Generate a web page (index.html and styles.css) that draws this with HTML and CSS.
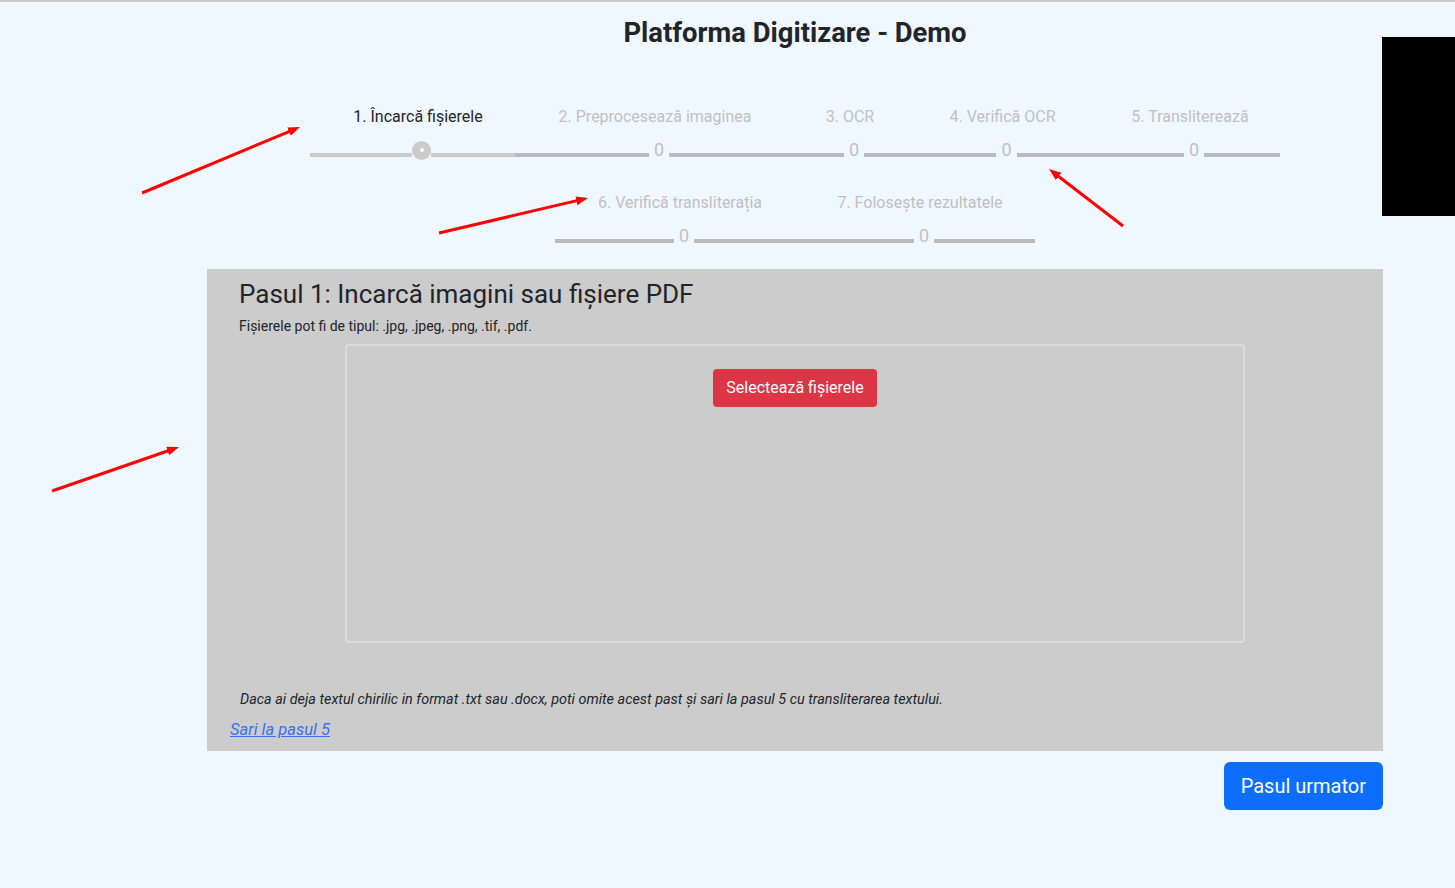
FILE: index.html
```html
<!DOCTYPE html>
<html lang="ro">
<head>
<meta charset="utf-8">
<title>Platforma Digitizare - Demo</title>
<link rel="stylesheet" href="styles.css">
</head>
<body>
<div class="topline"></div>
<div class="page">
  <h1 class="title">Platforma Digitizare - Demo</h1>
  <div class="stepper">
    <div class="step s1 active">
      <div class="label">1. Încarcă fișierele</div>
      <div class="track"><span class="bar"></span><span class="dot"></span><span class="bar"></span></div>
    </div>
    <div class="step s2">
      <div class="label">2. Preprocesează imaginea</div>
      <div class="track"><span class="bar"></span><span class="num">0</span><span class="bar"></span></div>
    </div>
    <div class="step s3">
      <div class="label">3. OCR</div>
      <div class="track"><span class="bar"></span><span class="num">0</span><span class="bar"></span></div>
    </div>
    <div class="step s4">
      <div class="label">4. Verifică OCR</div>
      <div class="track"><span class="bar"></span><span class="num">0</span><span class="bar"></span></div>
    </div>
    <div class="step s5">
      <div class="label">5. Transliterează</div>
      <div class="track"><span class="bar"></span><span class="num">0</span><span class="bar"></span></div>
    </div>
    <div class="step s6">
      <div class="label">6. Verifică transliterația</div>
      <div class="track"><span class="bar"></span><span class="num">0</span><span class="bar"></span></div>
    </div>
    <div class="step s7">
      <div class="label">7. Folosește rezultatele</div>
      <div class="track"><span class="bar"></span><span class="num">0</span><span class="bar"></span></div>
    </div>
  </div>

  <section class="panel">
    <h2 class="panel-title">Pasul 1: Incarcă imagini sau fișiere PDF</h2>
    <p class="panel-sub">Fișierele pot fi de tipul: .jpg, .jpeg, .png, .tif, .pdf.</p>
    <div class="dropzone">
      <button class="btn-select" type="button">Selectează fișierele</button>
    </div>
    <p class="hint">Daca ai deja textul chirilic in format .txt sau .docx, poti omite acest past și sari la pasul 5 cu transliterarea textului.</p>
    <a class="skip" href="#">Sari la pasul 5</a>
  </section>

  <div class="actions">
    <button class="btn-next" type="button">Pasul urmator</button>
  </div>
</div>

<div class="blackbox"></div>

<svg class="annotations" width="1455" height="888" viewBox="0 0 1455 888" aria-hidden="true">
  <defs>
    <marker id="ah" markerWidth="13" markerHeight="10" refX="6" refY="4.5" orient="auto" markerUnits="userSpaceOnUse">
      <path d="M0,0 L12,4.5 L0,9 z" fill="#f00"/>
    </marker>
  </defs>
  <g stroke="#f00" stroke-width="3" stroke-linecap="butt" fill="none">
    <line x1="142" y1="193" x2="294.5" y2="129.3" marker-end="url(#ah)"/>
    <line x1="439" y1="233" x2="582.2" y2="199.4" marker-end="url(#ah)"/>
    <line x1="1123" y1="226" x2="1053.8" y2="172.7" marker-end="url(#ah)"/>
    <line x1="52" y1="491" x2="173.3" y2="449" marker-end="url(#ah)"/>
  </g>
</svg>
</body>
</html>
```

FILE: styles.css
```css
html, body {
  margin: 0;
  padding: 0;
}
body {
  background: #f0f8ff;
  font-family: Roboto, "Liberation Sans", Arial, sans-serif;
  color: #212529;
  min-height: 888px;
  position: relative;
  overflow: hidden;
}
.topline {
  height: 2px;
  background: #c9cacc;
}
.page {
  width: 1176px;
  margin-left: 207px;
}
.title {
  margin: 14px 0 0;
  text-align: center;
  font-size: 27.4px;
  line-height: 34px;
  font-weight: 700;
  color: #212529;
}
.stepper {
  margin-top: 55px;
  display: flex;
  flex-wrap: wrap;
  justify-content: center;
  row-gap: 30px;
}
.s1 { width: 205px; }
.s2 { width: 280px; }
.s3 { width: 110px; }
.s4 { width: 195px; }
.s5 { width: 180px; }
.s6 { width: 250px; }
.s7 { width: 230px; }
.label {
  text-align: center;
  font-size: 16px;
  line-height: 24px;
  color: #bfc0c2;
  margin-bottom: 10px;
  white-space: nowrap;
}
.active .label {
  color: #212529;
  padding-left: 11px;
}
.track {
  display: flex;
  align-items: center;
  height: 22px;
}
.bar {
  flex: 1 1 0;
  height: 4px;
  margin-top: 10px;
  background: #babbbd;
}
.bar:first-child {
  flex-basis: 8px;
}
.active .bar {
  background: #cbcbcb;
}
.active .bar:first-child {
  flex: 0 0 102px;
}
.num {
  font-size: 18px;
  line-height: 22px;
  color: #bfc0c2;
  padding: 0 5px;
}
.dot {
  width: 19px;
  height: 19px;
  border-radius: 50%;
  background: #cbcbcb;
  position: relative;
}
.dot::after {
  content: "";
  position: absolute;
  left: 7.5px;
  top: 7.5px;
  width: 4px;
  height: 4px;
  border-radius: 50%;
  background: #fff;
}
.panel {
  margin-top: 22px;
  background: #cccccc;
  height: 482px;
  box-sizing: border-box;
  padding: 10px 0 0 23px;
}
.panel-title {
  margin: 0 0 0 9px;
  font-size: 26px;
  line-height: 31px;
  font-weight: 400;
  color: #212529;
}
.panel-sub {
  margin: 7px 0 0 9px;
  font-size: 14px;
  line-height: 18px;
}
.dropzone {
  width: 896px;
  height: 295px;
  margin: 9px 0 0 115px;
  border: 2px solid #dcdcdc;
  border-radius: 4px;
  display: flex;
  justify-content: center;
  align-items: flex-start;
}
.btn-select {
  margin-top: 23px;
  background: #dc3545;
  color: #fff;
  border: 0;
  border-radius: 4px;
  font-family: Roboto, "Liberation Sans", Arial, sans-serif;
  font-size: 16px;
  line-height: 24px;
  padding: 7px 13px;
}
.hint {
  margin: 47px 0 0 10px;
  font-size: 14.4px;
  line-height: 20px;
  font-style: italic;
}
.skip {
  display: inline-block;
  margin-top: 10px;
  font-size: 16.5px;
  line-height: 20px;
  font-style: italic;
  color: #3a6ff0;
}
.actions {
  display: flex;
  justify-content: flex-end;
  margin-top: 11px;
}
.btn-next {
  background: #0d6efd;
  color: #fff;
  border: 0;
  border-radius: 6px;
  font-family: Roboto, "Liberation Sans", Arial, sans-serif;
  font-size: 20px;
  line-height: 30px;
  padding: 9px 17px;
}
.blackbox {
  position: absolute;
  top: 37px;
  right: 0;
  width: 73px;
  height: 179px;
  background: #000;
}
.annotations {
  position: absolute;
  left: 0;
  top: 0;
  pointer-events: none;
}
```
